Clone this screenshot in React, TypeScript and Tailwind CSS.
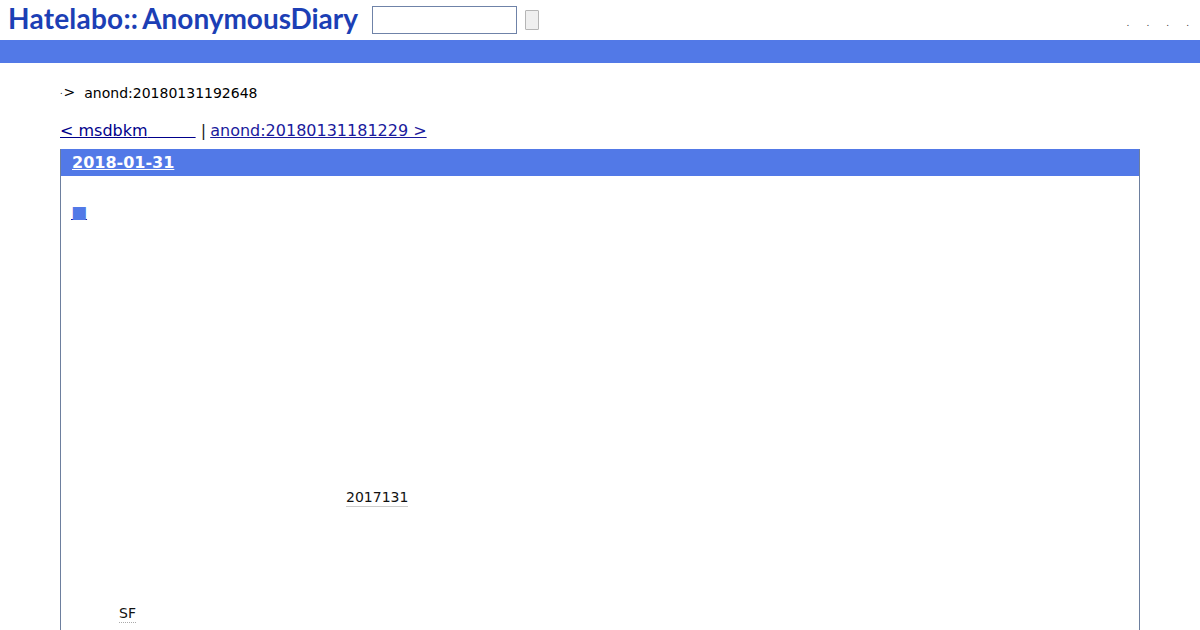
const FONT = "font-['DejaVu_Sans',sans-serif]";

export default function App() {
  return (
    <div className={`${FONT} h-[630px] overflow-hidden bg-white text-black`}>
      {/* Header */}
      <header className="flex h-10 items-center">
        <a className="ml-2 w-[352px] whitespace-nowrap pb-[3px] font-['Lato',sans-serif] text-[28px] font-bold leading-[37px] text-[#1c3fb5]">
          <span className="tracking-[0.22px]">Hatelabo::</span>
          <span className="ml-1 tracking-[-0.05px]">AnonymousDiary</span>
        </a>
        <input
          type="text"
          className="ml-3 h-7 w-[145px] border border-[#6f83a8] bg-white"
        />
        <button
          type="button"
          className="ml-2 h-5 w-[14px] rounded-[1px] border border-[#b5b5b5] bg-[#efefef]"
        />
        <nav className="ml-auto mr-[11px] mt-[6px] flex gap-[17px] text-[9px] leading-none text-[#333]">
          <span>.</span>
          <span>.</span>
          <span>.</span>
          <span>.</span>
        </nav>
      </header>
      <div className="h-[23px] bg-[#5279e7]" />

      <main className="px-[60px]">
        {/* Breadcrumb */}
        <p className="mt-[21px] flex h-[18px] items-center text-[14px] leading-[18px]">
          <span className="self-end text-[8px] leading-[20px]">.</span>
          <span className="ml-[1px] -translate-y-px">&gt;</span>
          <span className="ml-[9px]">anond:20180131192648</span>
        </p>

        {/* Prev / next */}
        <p className="mt-[19px] h-[20px] whitespace-nowrap text-[16px] leading-[20px] text-[#222]">
          <a className="text-[#00008b] underline">
            &lt; msdbkm
            <span className="tracking-[0.25px]">
              {"\u00a0\u00a0\u00a0\u00a0\u00a0\u00a0\u00a0\u00a0\u00a0"}
            </span>
          </a>{" "}
          |{" "}
          <a className="-ml-px text-[#1a1a9c] underline">anond:20180131181229 &gt;</a>
        </p>

        {/* Day section */}
        <section className="mt-2 h-[600px] border-x border-[#6d7f9e]">
          <h2 className="h-[27px] bg-[#5279e7] pl-[11px] text-[16px] font-bold leading-[28px] text-white">
            <a className="underline">2018-01-31</a>
          </h2>
          <h3 className="mt-[26px] h-[20px] pl-[10px] text-[17px] leading-[20px]">
            <a className="underline decoration-[#1a1a9c]">
              <span className="text-[#5279e7]">■</span>
            </a>
          </h3>
          <p className="ml-[285px] mt-[266px] w-fit border-b border-[#cccccc] text-[14px] leading-[18px] text-[#111]">
            2017131
          </p>
          <p className="ml-[58px] mt-[97px] w-fit border-b border-dotted border-[#aaaaaa] text-[14px] leading-[18px] text-[#111]">
            SF
          </p>
        </section>
      </main>
    </div>
  );
}
